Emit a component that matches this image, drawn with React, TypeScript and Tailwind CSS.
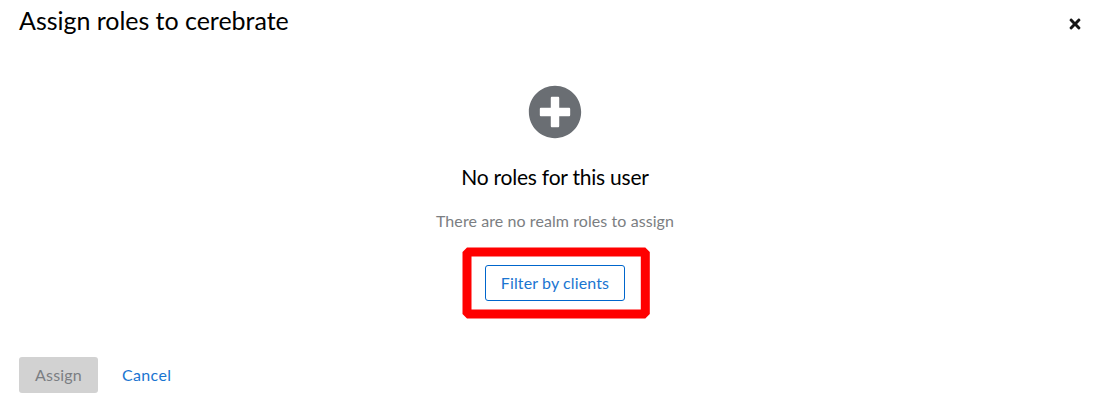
import React from "react";
import { FaPlusCircle, FaTimes } from "react-icons/fa";

export default function App() {
  return (
    <div className="flex h-[400px] w-[1112px] flex-col overflow-hidden bg-white font-['Lato','Liberation_Sans',sans-serif] text-base text-[#151515]">
      <header className="flex h-[44px] shrink-0 items-start justify-between pt-[5px] pr-[29px] pl-[19px]">
        <h1 className="text-[25px] leading-[31px] tracking-[-0.03px] whitespace-nowrap text-black">Assign roles to cerebrate</h1>
        <button aria-label="Close" className="mt-[11px]"><FaTimes size={16} /></button>
      </header>
      <main className="flex flex-1 flex-col items-center pt-[41px] pr-[2px]">
        <FaPlusCircle size={54} className="text-[#6a6e73]" />
        <h2 className="mt-[23px] text-[21px] leading-[30px] tracking-[-0.22px] whitespace-nowrap text-black">No roles for this user</h2>
        <p className="mt-[17px] leading-6 tracking-[0.08px] whitespace-nowrap text-[#7b7e82]">There are no realm roles to assign</p>
        <div className="relative mt-8">
          <button className="block h-9 w-[140px] rounded-[3px] border border-[#0066cc] tracking-[0.12px] text-[#1a75d1]">Filter by clients</button>
          <svg className="pointer-events-none absolute top-[-18px] left-[-23px]" width="188" height="72" viewBox="0 0 188 72" aria-hidden="true">
            <rect x="5" y="5" width="178.3" height="62" fill="none" stroke="#ff0000" strokeWidth="9" strokeLinejoin="bevel" />
          </svg>
        </div>
      </main>
      <footer className="flex h-[43px] shrink-0 items-start pl-[19px]">
        <button className="h-9 w-[79px] rounded-[3px] bg-[#d2d2d2] tracking-[0.2px] text-[#7b7e82]">Assign</button>
        <button className="ml-6 h-9 tracking-[0.35px] text-[#1a75d1]">Cancel</button>
      </footer>
    </div>
  );
}
